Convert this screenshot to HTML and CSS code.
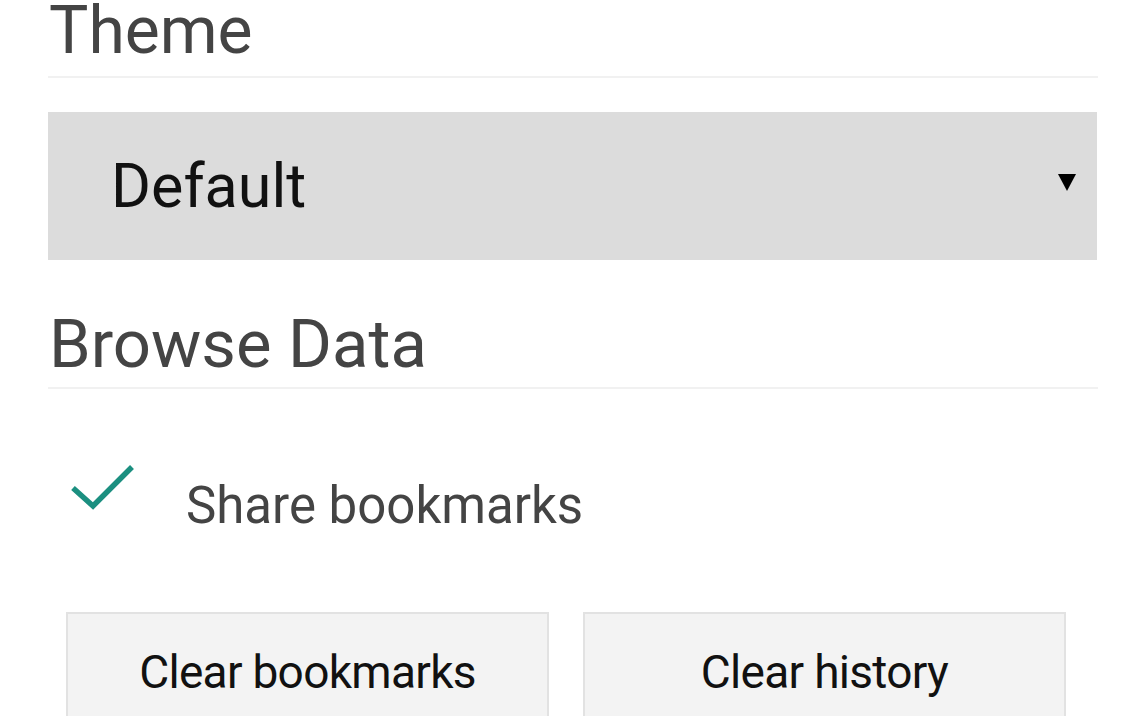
FILE: index.html
```html
<!DOCTYPE html>
<html>
<head>
<meta charset="utf-8">
<link rel="stylesheet" href="styles.css">
</head>
<body>
<div class="page">
  <div class="section-title title-theme">Theme</div>
  <div class="divider"></div>
  <div class="dropdown">
    <span class="dropdown-value">Default</span>
    <svg class="dropdown-arrow" width="20" height="20" viewBox="0 0 20 20"><polygon points="1,2 19,2 10,19" fill="#000"/></svg>
  </div>
  <div class="section-title title-browse">Browse Data</div>
  <div class="divider"></div>
  <div class="check-row">
    <svg class="check-icon" width="70" height="52" viewBox="0 0 70 52"><polyline points="7,28 27,46 66,7" fill="none" stroke="#1b8f80" stroke-width="5.5"/></svg>
    <span class="check-label">Share bookmarks</span>
  </div>
  <div class="button-row">
    <div class="btn">Clear bookmarks</div>
    <div class="btn">Clear history</div>
  </div>
</div>
</body>
</html>
```

FILE: styles.css
```css
html, body {
  margin: 0;
  padding: 0;
  background: #ffffff;
  overflow: hidden;
}
.page {
  width: 1050px;
  margin-left: 48px;
  font-family: Roboto, "Noto Sans", sans-serif;
}
.section-title {
  line-height: 60px;
  color: #444444;
  padding-left: 1px;
}
.title-theme {
  font-size: 66px;
  padding-top: 1px;
  padding-bottom: 15px;
}
.title-browse {
  font-size: 67px;
  margin-top: 54px;
  padding-bottom: 13px;
}
.divider {
  height: 2px;
  background: #f1f1f1;
}
.dropdown {
  margin-top: 34px;
  height: 148px;
  width: 1049px;
  background: #dcdcdc;
  display: flex;
  align-items: center;
  justify-content: space-between;
  box-sizing: border-box;
  padding-left: 63px;
  padding-right: 20px;
}
.dropdown-value {
  font-size: 61px;
  color: #111111;
}
.dropdown-arrow {
  margin-top: -8px;
}
.check-row {
  display: flex;
  align-items: flex-start;
  margin-top: 71px;
  padding-left: 18px;
  height: 80px;
}
.check-icon {
  flex: none;
}
.check-label {
  margin-left: 50px;
  margin-top: 16px;
  font-size: 51px;
  line-height: 60px;
  color: #444444;
}
.button-row {
  display: flex;
  gap: 34px;
  margin-top: 72px;
  padding-left: 18px;
}
.btn {
  width: 483px;
  height: 120px;
  box-sizing: border-box;
  background: #f3f3f3;
  border: 2px solid #e2e2e2;
  display: flex;
  align-items: center;
  justify-content: center;
  font-size: 46px;
  letter-spacing: -0.7px;
  color: #111111;
}
```
